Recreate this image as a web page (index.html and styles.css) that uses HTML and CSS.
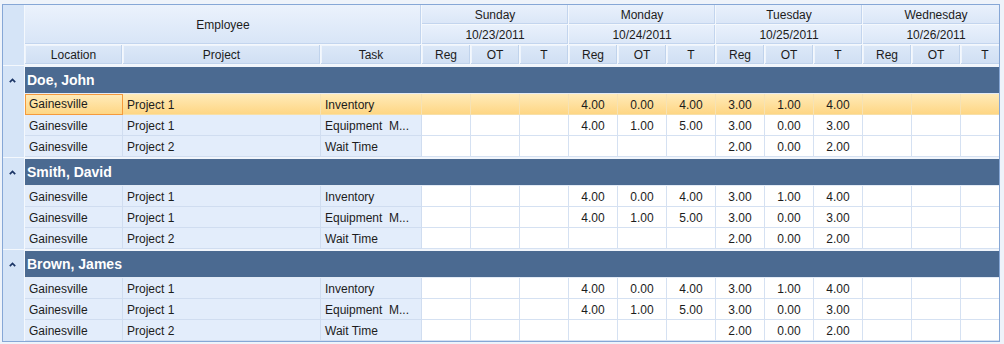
FILE: index.html
```html
<!DOCTYPE html>
<html>
<head>
<meta charset="utf-8">
<link rel="stylesheet" href="styles.css">
</head>
<body>
<div class="grid">
  <div class="head">
    <div class="h-ind"></div>
    <div class="hc emp">Employee</div>
    <div class="hc day d1">Sunday</div>
    <div class="hc day d2">Monday</div>
    <div class="hc day d3">Tuesday</div>
    <div class="hc day d4">Wednesday</div>
    <div class="hc date d1">10/23/2011</div>
    <div class="hc date d2">10/24/2011</div>
    <div class="hc date d3">10/25/2011</div>
    <div class="hc date d4">10/26/2011</div>
    <div class="hc col">Location</div>
    <div class="hc col">Project</div>
    <div class="hc col">Task</div>
    <div class="hc col">Reg</div><div class="hc col">OT</div><div class="hc col">T</div>
    <div class="hc col">Reg</div><div class="hc col">OT</div><div class="hc col">T</div>
    <div class="hc col">Reg</div><div class="hc col">OT</div><div class="hc col">T</div>
    <div class="hc col">Reg</div><div class="hc col">OT</div><div class="hc col">T</div>
  </div>

  <div class="group">
    <div class="g-ind"><svg width="7" height="5" viewBox="0 0 7 5"><polyline points="0.8,4.2 3.5,1.4 6.2,4.2" fill="none" stroke="#1b3566" stroke-width="1.7"/></svg></div>
    <div class="g-band">Doe, John</div>
  </div>
  <div class="row sel">
    <div class="ind"></div>
    <div class="c fx focus">Gainesville</div><div class="c fx">Project 1</div><div class="c fx">Inventory</div>
    <div class="c"></div><div class="c"></div><div class="c"></div>
    <div class="c n">4.00</div><div class="c n">0.00</div><div class="c n">4.00</div>
    <div class="c n">3.00</div><div class="c n">1.00</div><div class="c n">4.00</div>
    <div class="c"></div><div class="c"></div><div class="c"></div>
  </div>
  <div class="row">
    <div class="ind"></div>
    <div class="c fx">Gainesville</div><div class="c fx">Project 1</div><div class="c fx pre">Equipment  M...</div>
    <div class="c"></div><div class="c"></div><div class="c"></div>
    <div class="c n">4.00</div><div class="c n">1.00</div><div class="c n">5.00</div>
    <div class="c n">3.00</div><div class="c n">0.00</div><div class="c n">3.00</div>
    <div class="c"></div><div class="c"></div><div class="c"></div>
  </div>
  <div class="row">
    <div class="ind"></div>
    <div class="c fx">Gainesville</div><div class="c fx">Project 2</div><div class="c fx">Wait Time</div>
    <div class="c"></div><div class="c"></div><div class="c"></div>
    <div class="c"></div><div class="c"></div><div class="c"></div>
    <div class="c n">2.00</div><div class="c n">0.00</div><div class="c n">2.00</div>
    <div class="c"></div><div class="c"></div><div class="c"></div>
  </div>

  <div class="group">
    <div class="g-ind"><svg width="7" height="5" viewBox="0 0 7 5"><polyline points="0.8,4.2 3.5,1.4 6.2,4.2" fill="none" stroke="#1b3566" stroke-width="1.7"/></svg></div>
    <div class="g-band">Smith, David</div>
  </div>
  <div class="row">
    <div class="ind"></div>
    <div class="c fx">Gainesville</div><div class="c fx">Project 1</div><div class="c fx">Inventory</div>
    <div class="c"></div><div class="c"></div><div class="c"></div>
    <div class="c n">4.00</div><div class="c n">0.00</div><div class="c n">4.00</div>
    <div class="c n">3.00</div><div class="c n">1.00</div><div class="c n">4.00</div>
    <div class="c"></div><div class="c"></div><div class="c"></div>
  </div>
  <div class="row">
    <div class="ind"></div>
    <div class="c fx">Gainesville</div><div class="c fx">Project 1</div><div class="c fx pre">Equipment  M...</div>
    <div class="c"></div><div class="c"></div><div class="c"></div>
    <div class="c n">4.00</div><div class="c n">1.00</div><div class="c n">5.00</div>
    <div class="c n">3.00</div><div class="c n">0.00</div><div class="c n">3.00</div>
    <div class="c"></div><div class="c"></div><div class="c"></div>
  </div>
  <div class="row">
    <div class="ind"></div>
    <div class="c fx">Gainesville</div><div class="c fx">Project 2</div><div class="c fx">Wait Time</div>
    <div class="c"></div><div class="c"></div><div class="c"></div>
    <div class="c"></div><div class="c"></div><div class="c"></div>
    <div class="c n">2.00</div><div class="c n">0.00</div><div class="c n">2.00</div>
    <div class="c"></div><div class="c"></div><div class="c"></div>
  </div>

  <div class="group">
    <div class="g-ind"><svg width="7" height="5" viewBox="0 0 7 5"><polyline points="0.8,4.2 3.5,1.4 6.2,4.2" fill="none" stroke="#1b3566" stroke-width="1.7"/></svg></div>
    <div class="g-band">Brown, James</div>
  </div>
  <div class="row">
    <div class="ind"></div>
    <div class="c fx">Gainesville</div><div class="c fx">Project 1</div><div class="c fx">Inventory</div>
    <div class="c"></div><div class="c"></div><div class="c"></div>
    <div class="c n">4.00</div><div class="c n">0.00</div><div class="c n">4.00</div>
    <div class="c n">3.00</div><div class="c n">1.00</div><div class="c n">4.00</div>
    <div class="c"></div><div class="c"></div><div class="c"></div>
  </div>
  <div class="row">
    <div class="ind"></div>
    <div class="c fx">Gainesville</div><div class="c fx">Project 1</div><div class="c fx pre">Equipment  M...</div>
    <div class="c"></div><div class="c"></div><div class="c"></div>
    <div class="c n">4.00</div><div class="c n">1.00</div><div class="c n">5.00</div>
    <div class="c n">3.00</div><div class="c n">0.00</div><div class="c n">3.00</div>
    <div class="c"></div><div class="c"></div><div class="c"></div>
  </div>
  <div class="row">
    <div class="ind"></div>
    <div class="c fx">Gainesville</div><div class="c fx">Project 2</div><div class="c fx">Wait Time</div>
    <div class="c"></div><div class="c"></div><div class="c"></div>
    <div class="c"></div><div class="c"></div><div class="c"></div>
    <div class="c n">2.00</div><div class="c n">0.00</div><div class="c n">2.00</div>
    <div class="c"></div><div class="c"></div><div class="c"></div>
  </div>
</div>
</body>
</html>
```
FILE: styles.css
```css
html, body {
  margin: 0;
  padding: 0;
  background: #eef3fa;
}
body {
  font-family: "Liberation Sans", Arial, sans-serif;
  font-size: 12px;
  color: #1c1c1c;
}
.grid {
  --cols: 22px 98px 198px 101px repeat(12, 49px);
  margin: 4px 0 0 2px;
  width: 998px;
  border: 1px solid #86a7d6;
  box-sizing: border-box;
  overflow: hidden;
  background: #fff;
}
.head {
  display: grid;
  grid-template-columns: var(--cols);
  grid-template-rows: 20px 20px 20px;
  width: max-content;
  background: #dbe7f7;
}
.h-ind {
  grid-column: 1;
  grid-row: 1 / 4;
  background: #d5e4f7;
  border-right: 1px solid #f4f8fd;
}
.hc {
  box-sizing: border-box;
  display: flex;
  align-items: center;
  justify-content: center;
  padding-top: 1px;
  white-space: nowrap;
  overflow: hidden;
  border-right: 1px solid #f4f8fd;
  border-bottom: 1px solid #f4f8fd;
  box-shadow: inset -1px -1px 0 #c3d5ee;
}
.emp {
  grid-column: 2 / 5;
  grid-row: 1 / 3;
  background: linear-gradient(#ebf2fc, #d8e5f7);
}
.day, .date {
  background: linear-gradient(#e9f1fc, #dae6f7);
}
.day { grid-row: 1; }
.date { grid-row: 2; }
.d1 { grid-column: 5 / 8; }
.d2 { grid-column: 8 / 11; }
.d3 { grid-column: 11 / 14; }
.d4 { grid-column: 14 / 17; }
.col {
  grid-row: 3;
  background: linear-gradient(#dce8f8, #d0dff3);
  box-shadow: inset -1px -1px 0 #c0d3ec, inset 1px 1px 0 #eef4fc;
}
.group {
  display: flex;
  height: 29px;
}
.g-ind {
  flex: 0 0 22px;
  box-sizing: border-box;
  background: #d5e4f7;
  border-right: 1px solid #f4f8fd;
  border-top: 1px solid #f4f8fd;
  display: flex;
  align-items: center;
  justify-content: center;
  padding-right: 2px;
}
.g-ind svg { display: block; }
.g-band {
  flex: 1;
  box-sizing: border-box;
  background: #4b6a91;
  border-top: 2px solid #f1f5fb;
  border-bottom: 1px solid #e3ebf6;
  color: #fff;
  font-weight: bold;
  font-size: 14px;
  line-height: 26px;
  padding-left: 2px;
  white-space: nowrap;
}
.row {
  display: grid;
  grid-template-columns: var(--cols);
  height: 21px;
  width: max-content;
}
.ind {
  background: #d5e4f7;
  border-right: 1px solid #f4f8fd;
}
.c {
  box-sizing: border-box;
  border-right: 1px solid #d5e1f2;
  border-bottom: 1px solid #d5e1f2;
  line-height: 18px;
  padding: 2px 4px 0;
  white-space: nowrap;
  overflow: hidden;
  background: #fff;
}
.c.fx {
  background: #e3edfb;
  border-color: #d0ddf0;
}
.c.n { text-align: center; }
.pre { white-space: pre; }
.row.sel .c {
  background: linear-gradient(#ffebb9, #fed684);
  border-right-color: #f6e2b4;
  border-bottom-color: #f7dfa8;
}
.row.sel .c.focus {
  border: 1px solid #f59a3c;
  line-height: 17px;
  padding: 1px 4px 0 3px;
}
```
